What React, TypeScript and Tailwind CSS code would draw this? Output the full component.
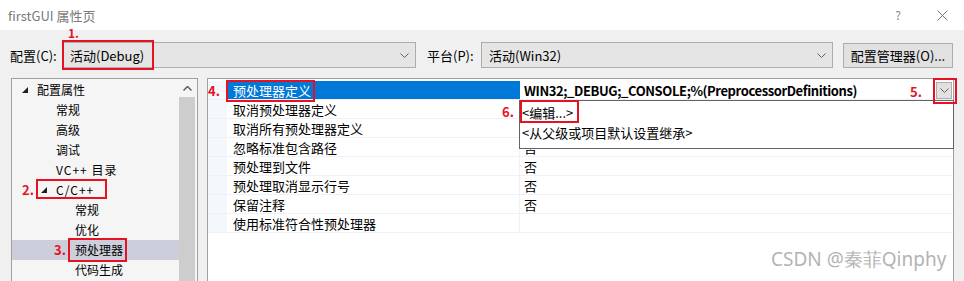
import React from "react";

const treeItems = [
  { text: "配置属性", level: 0, open: true },
  { text: "常规", level: 1 },
  { text: "高级", level: 1 },
  { text: "调试", level: 1 },
  { text: "VC++ 目录", level: 1, wide: true },
  { text: "C/C++", level: 1, open: true, wide: true },
  { text: "常规", level: 2 },
  { text: "优化", level: 2 },
  { text: "预处理器", level: 2, selected: true },
  { text: "代码生成", level: 2 },
];

const rows = [
  { name: "预处理器定义", value: "WIN32;_DEBUG;_CONSOLE;%(PreprocessorDefinitions)" },
  { name: "取消预处理器定义", value: "" },
  { name: "取消所有预处理器定义", value: "" },
  { name: "忽略标准包含路径", value: "否" },
  { name: "预处理到文件", value: "否" },
  { name: "预处理取消显示行号", value: "否" },
  { name: "保留注释", value: "否" },
  { name: "使用标准符合性预处理器", value: "" },
];

const padByLevel = ["pl-[10px]", "pl-[29px]", "pl-[48px]"];

function Chevron({ className = "" }: { className?: string }) {
  return (
    <svg width="9" height="5" viewBox="0 0 9 5" className={className}>
      <path d="M0.5 0.5 L4.5 4.5 L8.5 0.5" fill="none" stroke="#606060" strokeWidth="1" />
    </svg>
  );
}

function Triangle() {
  return (
    <svg width="6" height="6" viewBox="0 0 6 6">
      <polygon points="6,0 6,6 0,6" fill="#1e1e1e" />
    </svg>
  );
}

function Combo({ text, width }: { text: string; width: string }) {
  return (
    <div
      className={`${width} h-[26px] bg-[#e5e5e5] border border-[#adadad] flex items-center justify-between pl-[7px] pr-[6px]`}
    >
      <span>{text}</span>
      <Chevron />
    </div>
  );
}

export default function App() {
  return (
    <div className="relative w-[964px] h-[281px] overflow-hidden bg-[#f0f0f0] text-[13px] text-black font-['Noto_Sans_CJK_SC','Noto_Sans',sans-serif] leading-none">
      {/* title bar */}
      <div className="h-[30px] bg-white flex items-center justify-between pl-[8px] pr-[16px]">
        <span className="text-[#7a7a7a] text-[13px]">firstGUI 属性页</span>
        <div className="flex items-center gap-[36px] text-[#888]">
          <span className="text-[12px]">?</span>
          <svg width="11" height="11" viewBox="0 0 11 11">
            <path d="M0.5 0.5 L10.5 10.5 M10.5 0.5 L0.5 10.5" stroke="#666" strokeWidth="0.9" />
          </svg>
        </div>
      </div>

      {/* configuration row */}
      <div className="flex items-center h-[26px] mt-[12px] pl-[10px]">
        <span className="w-[52px]">配置(C):</span>
        <Combo text="活动(Debug)" width="w-[354px]" />
        <span className="ml-[11px] w-[54px]">平台(P):</span>
        <Combo text="活动(Win32)" width="w-[352px]" />
        <button className="ml-[10px] w-[110px] h-[25px] bg-[#e1e1e1] border border-[#adadad] flex items-center justify-center">
          配置管理器(O)...
        </button>
      </div>

      {/* main */}
      <div className="flex mt-[10px] pl-[11px] h-[210px]">
        {/* tree */}
        <div className="w-[187px] h-full border border-[#a0a0a0] bg-[#f5f5f5] flex text-[12px]">
          <div className="flex-1 pt-[1px]">
            {treeItems.map((item, i) => (
              <div
                key={i}
                className={`h-[20px] flex items-center ${padByLevel[item.level]} ${item.selected ? "bg-[#cccedb]" : ""}`}
              >
                <span className="w-[15px] flex items-center">{item.open && <Triangle />}</span>
                <span className={item.wide ? "tracking-[1px]" : ""}>{item.text}</span>
              </div>
            ))}
          </div>
          <div className="w-[16px] mr-[2px] flex flex-col">
            <div className="h-[18px] flex items-center justify-center">
              <svg width="9" height="5" viewBox="0 0 9 5">
                <path d="M0.5 4.5 L4.5 0.5 L8.5 4.5" fill="none" stroke="#606060" strokeWidth="1.5" />
              </svg>
            </div>
            <div className="flex-1 bg-[#cdcdcd]" />
          </div>
        </div>

        {/* property grid */}
        <div className="ml-[9px] w-[747px] h-full border border-[#a0a0a0] bg-white pt-[2px]">
          {rows.map((row, i) => (
            <div key={i} className="flex h-[19px] border-b border-[#eef1f7]">
              <div className="w-[19px] bg-[#f4f7fc]" />
              <div
                className={`w-[293px] flex items-center pl-[6px] ${i === 0 ? "bg-[#0078d7] text-white" : "border-r border-[#eef1f7]"}`}
              >
                {row.name}
              </div>
              {i === 0 ? (
                <div className="flex-1 flex items-center justify-between pl-[4px] pr-[1px]">
                  <span className="font-bold tracking-[-0.4px]">{row.value}</span>
                  <div className="w-[16px] h-[17px] bg-[#e1e1e1] border border-[#adadad] flex items-center justify-center">
                    <Chevron />
                  </div>
                </div>
              ) : (
                <div className="flex-1 flex items-center pl-[4px]">{row.value}</div>
              )}
            </div>
          ))}
        </div>
      </div>

      {/* dropdown list */}
      <div className="absolute left-[519px] top-[100px] w-[435px] h-[49px] bg-white border border-[#646464] pt-[1px]">
        <div className="h-[20px] flex items-center pl-[2px]">&lt;编辑...&gt;</div>
        <div className="h-[20px] flex items-center pl-[2px]">&lt;从父级或项目默认设置继承&gt;</div>
      </div>

      {/* watermark */}
      <div className="absolute left-[771px] top-[250px] text-[19px] text-[#b3b3b3] font-['Noto_Sans',sans-serif]">
        CSDN @秦菲Qinphy
      </div>

      {/* annotations */}
      <div className="absolute left-[62px] top-[40px] w-[92px] h-[30px] border-2 border-[#e81123]" />
      <div className="absolute left-[36px] top-[179px] w-[71px] h-[20px] border-2 border-[#e81123]" />
      <div className="absolute left-[68px] top-[238px] w-[59px] h-[24px] border-2 border-[#e81123]" />
      <div className="absolute left-[226px] top-[80px] w-[89px] h-[22px] border-2 border-[#e81123]" />
      <div className="absolute left-[933px] top-[78px] w-[24px] h-[26px] border-2 border-[#e81123]" />
      <div className="absolute left-[520px] top-[100px] w-[59px] h-[23px] border-2 border-[#e81123]" />

      <span className="absolute left-[68px] top-[27px] text-[12px] font-bold text-[#e81123]">1.</span>
      <span className="absolute left-[22px] top-[183px] text-[13px] font-bold text-[#e81123]">2.</span>
      <span className="absolute left-[54px] top-[243px] text-[13px] font-bold text-[#e81123]">3.</span>
      <span className="absolute left-[208px] top-[84px] text-[13px] font-bold text-[#e81123]">4.</span>
      <span className="absolute left-[910px] top-[85px] text-[13px] font-bold text-[#e81123]">5.</span>
      <span className="absolute left-[502px] top-[105px] text-[13px] font-bold text-[#e81123]">6.</span>
    </div>
  );
}
